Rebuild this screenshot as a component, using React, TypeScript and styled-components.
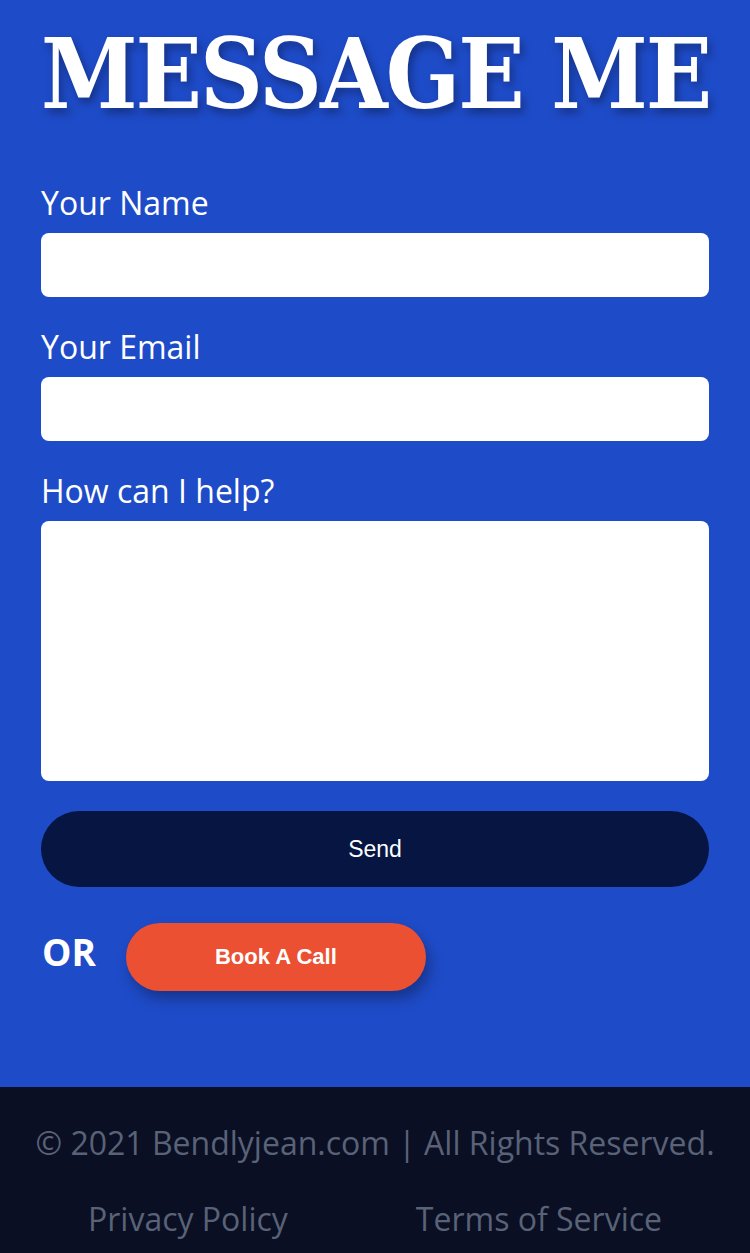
import React from "react";
import styled, { createGlobalStyle } from "styled-components";

const Global = createGlobalStyle`
  html, body { margin: 0; padding: 0; }
  body { background: #0a0f24; }
  * { box-sizing: border-box; }
`;

const Page = styled.div`
  width: 750px;
  display: flex;
  flex-direction: column;
`;

const ContactSection = styled.section`
  background: #1e4bc8;
  padding: 14px 41px 96px;
  display: flex;
  flex-direction: column;
`;

const Heading = styled.h1`
  margin: 0 0 48px;
  font-family: "DejaVu Serif", serif;
  font-stretch: condensed;
  font-weight: 700;
  font-size: 97px;
  letter-spacing: -2px;
  line-height: 120px;
  color: #ffffff;
  text-align: center;
  white-space: nowrap;
  text-shadow: 3px 5px 8px rgba(0, 0, 0, 0.35);
`;

const Form = styled.form`
  display: flex;
  flex-direction: column;
`;

const Label = styled.label`
  font-family: "Open Sans", sans-serif;
  font-size: 32px;
  line-height: 42px;
  color: #ffffff;
  margin-bottom: 9px;
`;

const Field = styled.div`
  display: flex;
  flex-direction: column;
  margin-bottom: 29px;
`;

const Input = styled.input`
  height: 64px;
  width: 100%;
  border: none;
  border-radius: 8px;
  background: #ffffff;
  outline: none;
`;

const TextArea = styled.textarea`
  height: 260px;
  width: 100%;
  border: none;
  border-radius: 8px;
  background: #ffffff;
  resize: none;
  outline: none;
`;

const SendButton = styled.button`
  margin-top: 1px;
  height: 76px;
  width: 100%;
  border: none;
  border-radius: 38px;
  background: #061541;
  color: #ffffff;
  font-family: "Liberation Sans", Arial, sans-serif;
  font-size: 23px;
  cursor: pointer;
`;

const AltRow = styled.div`
  margin-top: 36px;
  display: flex;
  align-items: center;
  gap: 30px;
`;

const OrText = styled.span`
  font-family: "Open Sans", sans-serif;
  font-weight: 700;
  font-size: 37px;
  line-height: 48px;
  color: #ffffff;
  padding-left: 1px;
  margin-bottom: 10px;
`;

const BookButton = styled.button`
  width: 300px;
  height: 68px;
  border: none;
  border-radius: 34px;
  background: #eb5033;
  color: #ffffff;
  font-family: "Liberation Sans", Arial, sans-serif;
  font-weight: 700;
  font-size: 22px;
  box-shadow: 4px 8px 14px rgba(0, 0, 0, 0.3);
  cursor: pointer;
`;

const Footer = styled.footer`
  background: #0a0f24;
  height: 166px;
  display: flex;
  flex-direction: column;
  align-items: center;
  padding-top: 32px;
  font-family: "Open Sans", sans-serif;
  color: #596277;
`;

const Copyright = styled.p`
  margin: 0;
  font-size: 32px;
  line-height: 48px;
  white-space: nowrap;
`;

const Links = styled.nav`
  margin-top: 28px;
  display: flex;
  gap: 128px;
`;

const FooterLink = styled.a`
  font-size: 32px;
  line-height: 48px;
  color: #596277;
  text-decoration: none;
`;

export default function App() {
  return (
    <Page>
      <Global />
      <ContactSection>
        <Heading>MESSAGE ME</Heading>
        <Form onSubmit={(e) => e.preventDefault()}>
          <Field>
            <Label>Your Name</Label>
            <Input type="text" />
          </Field>
          <Field>
            <Label>Your Email</Label>
            <Input type="email" />
          </Field>
          <Field>
            <Label>How can I help?</Label>
            <TextArea />
          </Field>
          <SendButton type="submit">Send</SendButton>
        </Form>
        <AltRow>
          <OrText>OR</OrText>
          <BookButton type="button">Book A Call</BookButton>
        </AltRow>
      </ContactSection>
      <Footer>
        <Copyright>© 2021 Bendlyjean.com | All Rights Reserved.</Copyright>
        <Links>
          <FooterLink href="#">Privacy Policy</FooterLink>
          <FooterLink href="#">Terms of Service</FooterLink>
        </Links>
      </Footer>
    </Page>
  );
}
